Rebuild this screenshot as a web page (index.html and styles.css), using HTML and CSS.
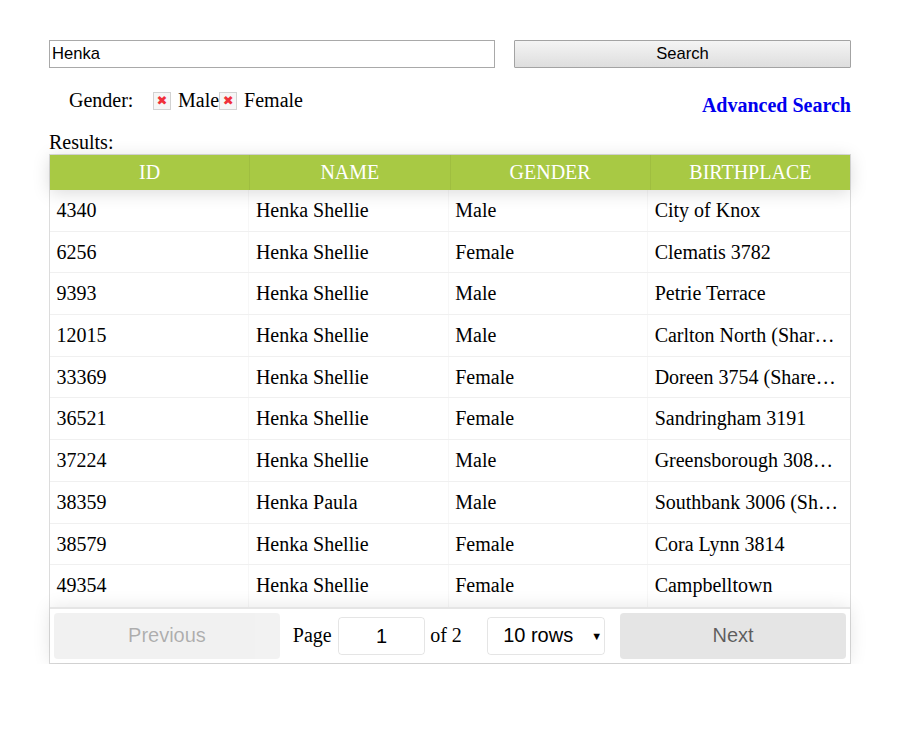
FILE: index.html
```html
<!DOCTYPE html>
<html>
<head>
<meta charset="utf-8">
<link rel="stylesheet" href="styles.css">
</head>
<body>
<div class="page">
  <div class="search-row">
    <input class="search-input" type="text" value="Henka">
    <button class="search-btn">Search</button>
  </div>
  <div class="filter-row">
    <div class="gender">
      <span class="gender-label">Gender:</span>
      <span class="cb"><span class="x">✖</span></span><span class="opt">Male</span><span class="cb"><span class="x">✖</span></span><span class="opt">Female</span>
    </div>
    <a class="adv" href="#">Advanced Search</a>
  </div>
  <div class="results-label">Results:</div>
  <div class="rt">
    <div class="thead">
      <div class="th">ID</div>
      <div class="th">NAME</div>
      <div class="th">GENDER</div>
      <div class="th last">BIRTHPLACE</div>
    </div>
    <div class="tbody">
      <div class="tr"><div class="td">4340</div><div class="td">Henka Shellie</div><div class="td">Male</div><div class="td last">City of Knox</div></div>
      <div class="tr"><div class="td">6256</div><div class="td">Henka Shellie</div><div class="td">Female</div><div class="td last">Clematis 3782</div></div>
      <div class="tr"><div class="td">9393</div><div class="td">Henka Shellie</div><div class="td">Male</div><div class="td last">Petrie Terrace</div></div>
      <div class="tr"><div class="td">12015</div><div class="td">Henka Shellie</div><div class="td">Male</div><div class="td last">Carlton North (Shared Accommodation)</div></div>
      <div class="tr"><div class="td">33369</div><div class="td">Henka Shellie</div><div class="td">Female</div><div class="td last">Doreen 3754 (Shared Accommodation)</div></div>
      <div class="tr"><div class="td">36521</div><div class="td">Henka Shellie</div><div class="td">Female</div><div class="td last">Sandringham 3191</div></div>
      <div class="tr"><div class="td">37224</div><div class="td">Henka Shellie</div><div class="td">Male</div><div class="td last">Greensborough 3088 (Shared Accommodation)</div></div>
      <div class="tr"><div class="td">38359</div><div class="td">Henka Paula</div><div class="td">Male</div><div class="td last">Southbank 3006 (Shared Accommodation)</div></div>
      <div class="tr"><div class="td">38579</div><div class="td">Henka Shellie</div><div class="td">Female</div><div class="td last">Cora Lynn 3814</div></div>
      <div class="tr"><div class="td">49354</div><div class="td">Henka Shellie</div><div class="td">Female</div><div class="td last">Campbelltown</div></div>
    </div>
    <div class="pagination">
      <div class="pg-side"><button class="pg-btn disabled">Previous</button></div>
      <div class="pg-center">
        <span class="page-info">Page <span class="page-jump">1</span> of 2</span>
        <span class="page-size">10 rows<span class="arrow">▼</span></span>
      </div>
      <div class="pg-side"><button class="pg-btn">Next</button></div>
    </div>
  </div>
</div>
</body>
</html>
```
FILE: styles.css
```css
html, body {
  margin: 0;
  padding: 0;
  background: #fff;
}
body {
  font-family: "Liberation Serif", "Times New Roman", serif;
  font-size: 20px;
  color: #000;
}
.page {
  width: 802px;
  margin-left: 49px;
  padding-top: 40px;
}
.search-row {
  display: flex;
  justify-content: space-between;
  height: 28px;
}
.search-input {
  width: 446px;
  height: 28px;
  box-sizing: border-box;
  border: 1px solid #a9a9a9;
  padding: 0 2px;
  font-family: "Liberation Sans", Arial, sans-serif;
  font-size: 16.6px;
  color: #000;
  outline: none;
  margin: 0;
}
.search-btn {
  width: 337px;
  height: 28px;
  box-sizing: border-box;
  border: 1px solid #a3a3a3;
  border-radius: 1px;
  background: linear-gradient(#f4f4f4, #dedede);
  font-family: "Liberation Sans", Arial, sans-serif;
  font-size: 16.6px;
  color: #000;
  padding: 0;
  margin: 0;
}
.filter-row {
  display: flex;
  justify-content: space-between;
  align-items: flex-start;
  margin-top: 19px;
  height: 44px;
}
.gender {
  display: flex;
  align-items: center;
  padding-left: 20px;
  height: 26px;
}
.gender-label {
  width: 84px;
}
.cb {
  width: 16px;
  height: 16px;
  border: 1px solid #d2d2d2;
  background: #f6f6f6;
  display: inline-flex;
  align-items: center;
  justify-content: center;
  margin-top: 1px;
}
.cb .x {
  color: #f0303a;
  font-family: "DejaVu Sans", sans-serif;
  font-size: 13px;
  font-weight: bold;
  line-height: 1;
}
.cb + .opt {
  margin-left: 7px;
}
.opt + .cb {
  margin-left: 0;
}
.adv {
  font-weight: bold;
  color: #0000ee;
  text-decoration: none;
  margin-top: 7px;
  line-height: 23px;
}
.results-label {
  line-height: 23px;
}
.rt {
  border: 1px solid #dcdcdc;
  display: flex;
  flex-direction: column;
}
.thead {
  display: flex;
  background: #a8c944;
  height: 35px;
  box-shadow: 0 2.5px 18px 0 rgba(0,0,0,0.15);
  position: relative;
  z-index: 1;
}
.th {
  flex: 1;
  color: #fff;
  text-align: center;
  line-height: 35px;
  border-right: 1px solid rgba(0,0,0,0.05);
}
.th.last { border-right: none; }
.tbody {
  display: flex;
  flex-direction: column;
}
.tr {
  display: flex;
  height: 41.7px;
  box-sizing: border-box;
  border-bottom: 1.25px solid rgba(0,0,0,0.06);
}
.tr:last-child { border-bottom: none; }
.td {
  flex: 1;
  min-width: 0;
  padding: 0 6.5px;
  line-height: 40.5px;
  white-space: nowrap;
  overflow: hidden;
  text-overflow: ellipsis;
  border-right: 1px solid rgba(0,0,0,0.03);
}
.td.last { border-right: none; padding-right: 10px; }
.pagination {
  display: flex;
  height: 56px;
  box-sizing: border-box;
  padding: 3.75px;
  border-top: 2.5px solid rgba(0,0,0,0.1);
  box-shadow: 0 0 18px 0 rgba(0,0,0,0.1);
  position: relative;
}
.pg-side {
  flex: 1;
  display: flex;
}
.pg-btn {
  flex: 1;
  border: none;
  border-radius: 3.75px;
  background: rgba(0,0,0,0.1);
  color: rgba(0,0,0,0.6);
  font-family: "Liberation Sans", Arial, sans-serif;
  font-size: 20px;
  padding: 0;
  margin: 0;
}
.pg-btn.disabled {
  opacity: 0.5;
}
.pg-center {
  flex: 1.5;
  display: flex;
  align-items: center;
  justify-content: space-around;
}
.page-info {
  display: flex;
  align-items: center;
  white-space: nowrap;
  margin-left: 0;
}
.page-jump {
  display: inline-block;
  width: 87.5px;
  height: 38px;
  box-sizing: border-box;
  border: 1px solid rgba(0,0,0,0.1);
  border-radius: 3.75px;
  text-align: center;
  line-height: 36px;
  font-family: "Liberation Sans", Arial, sans-serif;
  font-size: 20px;
  margin: 0 5px 0 6px;
}
.page-size {
  display: inline-flex;
  align-items: center;
  width: 118px;
  height: 38px;
  box-sizing: border-box;
  border: 1px solid rgba(0,0,0,0.1);
  border-radius: 3.75px;
  padding-left: 15px;
  font-family: "Liberation Sans", Arial, sans-serif;
  font-size: 20px;
  margin-right: 2px;
}
.arrow {
  font-size: 11px;
  margin-left: 18px;
}
```
